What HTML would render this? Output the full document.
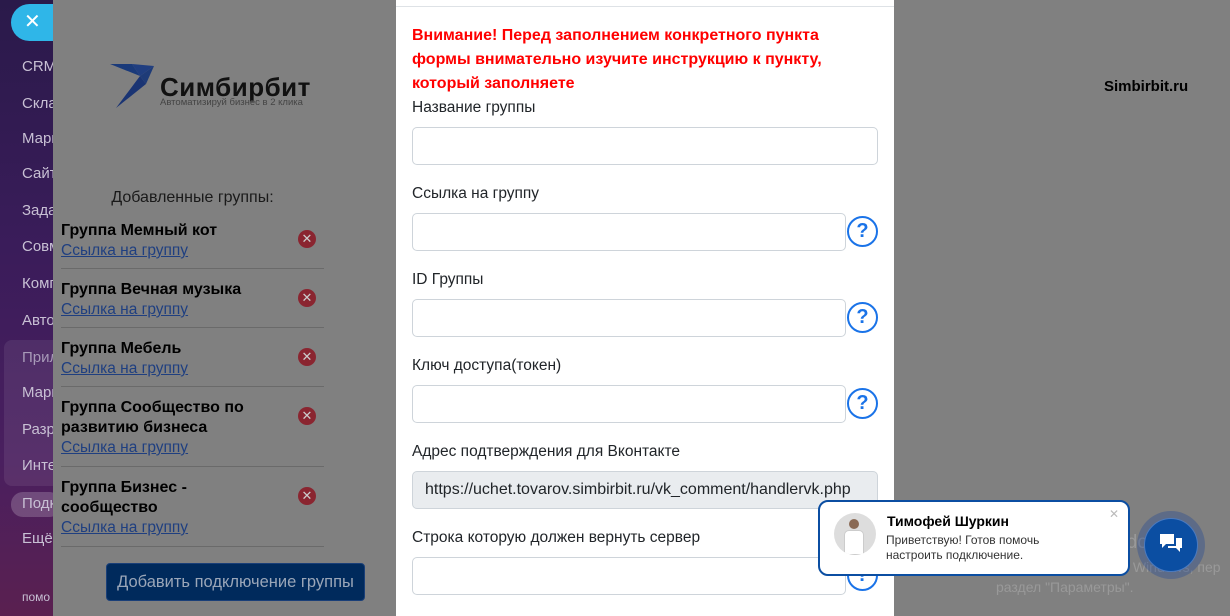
<!DOCTYPE html>
<html><head><meta charset="utf-8"><style>
*{box-sizing:border-box;margin:0;padding:0}
body{width:1230px;height:616px;overflow:hidden;position:relative;background:#808080;font-family:"Liberation Sans","DejaVu Sans",sans-serif}
.sb{position:absolute;left:0;top:0;width:53px;height:616px;background:linear-gradient(180deg,#2a1a4a 0%,#3a1c5a 40%,#4a1f5f 75%,#5a2050 100%);overflow:hidden}
.sb div{position:absolute;left:22px;color:#c8c0d4;font-size:15px;white-space:nowrap}
.closebtn{position:absolute;left:11px;top:4px;width:42px;height:37px;border-radius:19px 0 0 19px;background:#2fb6e8;color:#fff;font-size:20px;line-height:36px;padding-left:13px}
.grp{position:absolute;left:61px;width:263px;border-bottom:1px solid #6a6a6a;padding-top:2px}
.grp b{display:block;font-size:16px;color:#000;line-height:20px;width:220px}
.grp a{display:block;font-size:15.5px;color:#1f3f80;text-decoration:underline;line-height:20px}
.x{position:absolute;left:298px;width:18px;height:18px;border-radius:50%;background:#8a2530;color:#ccc;font-size:13px;text-align:center;line-height:18px;font-weight:bold}
.modal{position:absolute;left:396px;top:0;width:498px;height:616px;background:#fff}
.modal .top{position:absolute;left:0;right:0;top:6px;border-top:1px solid #dee2e6}
.warn{position:absolute;left:16px;top:24px;width:450px;color:#f00;font-weight:bold;font-size:16px;line-height:24px}
.lbl{position:absolute;left:16px;font-size:15.5px;color:#212529}
.inp{position:absolute;left:16px;height:38px;border:1px solid #ced4da;border-radius:5px;background:#fff}
.q{position:absolute;left:451px;width:31px;height:31px;border:2.5px solid #1a73e8;border-radius:50%;color:#1a73e8;font-weight:bold;font-size:20px;text-align:center;line-height:26px}
</style></head><body>
<div class="sb">
<div style="top:58px">CRM</div><div style="top:95px">Склад</div><div style="top:130px">Маркет</div><div style="top:165px">Сайты</div><div style="top:202px">Задачи</div><div style="top:238px">Совм</div><div style="top:275px">Компания</div><div style="top:312px">Автом</div>
<div style="left:4px;top:340px;width:60px;height:146px;background:rgba(255,255,255,.08);border-radius:8px"></div>
<div style="top:349px;color:#a89ab8">Прил</div><div style="top:384px">Марк</div><div style="top:421px">Разр</div><div style="top:457px">Инте</div>
<div style="left:11px;top:492px;width:50px;height:25px;background:rgba(255,255,255,.2);border-radius:12px"></div>
<div style="top:495px">Подк</div><div style="top:530px">Ещё</div><div style="top:590px;font-size:12px">помо</div>
</div>
<div class="closebtn">✕</div>
<svg style="position:absolute;left:110px;top:62px" width="48" height="48" viewBox="0 0 48 48"><polygon points="0,2 22,2 30,14" fill="#1a3a7a"/><polygon points="22,2 44,4 30,14" fill="#203e80"/><polygon points="30,14 44,4 36,22" fill="#1e3b78"/><polygon points="30,14 36,22 6,46" fill="#1a3473"/></svg>
<div style="position:absolute;left:160px;top:72px;font-size:26px;font-weight:bold;color:#111;letter-spacing:.5px">Симбирбит</div>
<div style="position:absolute;left:160px;top:97px;font-size:9.5px;color:#444">Автоматизируй бизнес в 2 клика</div>
<div style="position:absolute;left:61px;top:189px;width:263px;text-align:center;font-size:16px;color:#1a1a1a">Добавленные группы:</div>
<div class="grp" style="top:219px;height:50px"><b>Группа Мемный кот</b><a>Ссылка на группу</a></div><div class="x" style="top:230px">✕</div>
<div class="grp" style="top:278px;height:50px"><b>Группа Вечная музыка</b><a>Ссылка на группу</a></div><div class="x" style="top:289px">✕</div>
<div class="grp" style="top:337px;height:50px"><b>Группа Мебель</b><a>Ссылка на группу</a></div><div class="x" style="top:348px">✕</div>
<div class="grp" style="top:396px;height:71px"><b>Группа Сообщество по развитию бизнеса</b><a>Ссылка на группу</a></div><div class="x" style="top:407px">✕</div>
<div class="grp" style="top:476px;height:71px"><b>Группа Бизнес - сообщество</b><a>Ссылка на группу</a></div><div class="x" style="top:487px">✕</div>
<div style="position:absolute;left:106px;top:563px;width:259px;height:38px;background:#002a5c;border:1px solid #1a3f78;border-radius:4px;color:#9aa6b8;font-size:16.5px;text-align:center;line-height:36px;white-space:nowrap">Добавить подключение группы</div>
<div style="position:absolute;left:1104px;top:78px;font-size:15px;font-weight:bold;color:#000">Simbirbit.ru</div>
<div class="modal">
<div class="top"></div>
<div class="warn">Внимание! Перед заполнением конкретного пункта формы внимательно изучите инструкцию к пункту, который заполняете</div>
<div class="lbl" style="top:99px">Название группы</div>
<div class="inp" style="top:127px;width:466px"></div>
<div class="lbl" style="top:185px">Ссылка на группу</div>
<div class="inp" style="top:213px;width:434px"></div><div class="q" style="top:216px">?</div>
<div class="lbl" style="top:271px">ID Группы</div>
<div class="inp" style="top:299px;width:434px"></div><div class="q" style="top:302px">?</div>
<div class="lbl" style="top:357px">Ключ доступа(токен)</div>
<div class="inp" style="top:385px;width:434px"></div><div class="q" style="top:388px">?</div>
<div class="lbl" style="top:443px">Адрес подтверждения для Вконтакте</div>
<div class="inp" style="top:471px;width:466px;background:#e9ecef;padding:9px 12px;font-size:16px;color:#212529;white-space:nowrap">https://uchet.tovarov.simbirbit.ru/vk_comment/handlervk.php</div>
<div class="lbl" style="top:529px">Строка которую должен вернуть сервер</div>
<div class="inp" style="top:557px;width:434px"></div><div class="q" style="top:560px">?</div>
</div>
<div style="position:absolute;left:996px;top:532px;font-size:19px;color:#999">Активация Windows</div>
<div style="position:absolute;left:996px;top:557px;font-size:14px;color:#999;line-height:20px">Чтобы активировать Windows, пер<br>раздел "Параметры".</div>
<div style="position:absolute;left:818px;top:500px;width:312px;height:76px;background:#fff;border:2px solid #0b4ea2;border-radius:10px"></div>
<div style="position:absolute;left:834px;top:513px;width:42px;height:42px;border-radius:50%;background:#ddd;overflow:hidden"><div style="position:absolute;left:15px;top:6px;width:10px;height:10px;border-radius:50%;background:#8a6a55"></div><div style="position:absolute;left:10px;top:17px;width:20px;height:25px;background:#fff;border-radius:5px 5px 0 0;border:1px solid #ccc"></div></div>
<div style="position:absolute;left:887px;top:513px;font-size:14px;font-weight:bold;color:#000">Тимофей Шуркин</div>
<div style="position:absolute;left:886px;top:533px;font-size:12px;color:#333;line-height:15px">Приветствую! Готов помочь<br>настроить подключение.</div>
<div style="position:absolute;left:1109px;top:507px;font-size:12px;color:#bbb">✕</div>
<div style="position:absolute;left:1137px;top:511px;width:68px;height:68px;border-radius:50%;background:rgba(30,70,150,.35)"></div>
<div style="position:absolute;left:1144px;top:518px;width:54px;height:54px;border-radius:50%;background:#0b4ea2;border:1px solid #4a7ac0"></div>
<svg style="position:absolute;left:1158px;top:532px" width="26" height="24" viewBox="0 0 26 24"><path d="M2 2h14v10H8l-4 4v-4H2z" fill="#fff"/><path d="M18 6h6v10h-2v4l-4-4h-8v-2h8z" fill="#fff"/></svg>
</body></html>
